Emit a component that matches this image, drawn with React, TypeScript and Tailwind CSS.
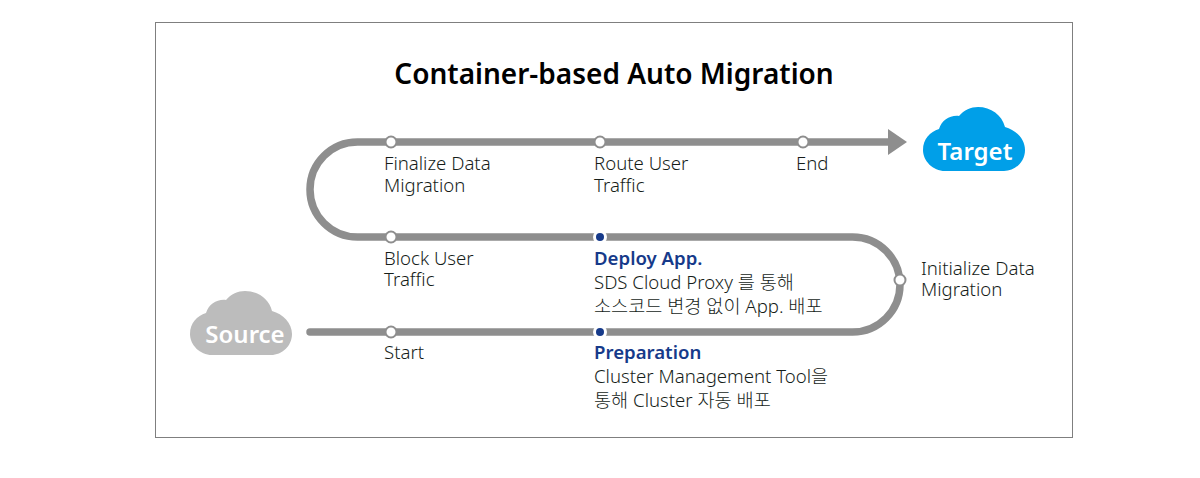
const cloud = "M22 64C10 64 0 54 0 43C0 32 7 25 16 22C19 13 27 8 36 9C41 3 48 0 55 0C68 0 79 8 82 20C93 23 102 32 102 43C102 55 92 64 81 64Z";

function Cloud({ className, fill, label, textClass }: { className: string; fill: string; label: string; textClass: string }) {
  return (
    <div className={`absolute h-[64px] w-[102px] ${className}`}>
      <svg width="102" height="64" viewBox="0 0 102 64" className="absolute inset-0">
        <path d={cloud} fill={fill} />
      </svg>
      <div className={`absolute inset-x-0 text-center text-[24px] leading-[34px] font-semibold text-white ${textClass}`}>{label}</div>
    </div>
  );
}

function Label({ className = "", lines, title, tight }: { className?: string; lines: string[]; title?: string; tight?: boolean }) {
  const lead = title ? "leading-[24px]" : tight ? "leading-[21px]" : "leading-[22px]";
  return (
    <div className={`whitespace-nowrap text-[18.6px] font-[260] text-[#161d19] ${className}`}>
      {title && <div className="leading-[24px] font-semibold text-[#163a8a]">{title}</div>}
      {lines.map((l) => (
        <div key={l} className={lead}>{l}</div>
      ))}
    </div>
  );
}

const whiteNodes = [[235, 48], [444, 48], [647, 48], [235, 143], [744, 186], [235, 238]];
const blueNodes = [[444, 143], [444, 238]];

export default function App() {
  return (
    <div className="h-[478px] w-[1200px] bg-white pt-[22px] pl-[155px] font-['Noto_Sans','Noto_Sans_CJK_KR',sans-serif]">
      <div className="flex h-[416px] w-[918px] flex-col border border-[#7f7f7f]">
        <h1 className="mt-[29px] text-center text-[28px] leading-[42px] font-semibold text-black">Container-based Auto Migration</h1>
        <div className="relative flex-1">
          <svg width="916" height="320" viewBox="0 0 916 320" className="absolute inset-0">
            <path
              d="M154 238H696.5A47.5 47.5 0 0 0 696.5 143H201.5A47.5 47.5 0 0 1 201.5 48H734"
              fill="none"
              stroke="#8e8e8e"
              strokeWidth="7.5"
              strokeLinecap="round"
            />
            <path d="M732 35L751 48L732 61Z" fill="#8e8e8e" />
            {whiteNodes.map(([x, y]) => (
              <circle key={`${x}-${y}`} cx={x} cy={y} r="5.5" fill="#fff" stroke="#8e8e8e" strokeWidth="2" />
            ))}
            {blueNodes.map(([x, y]) => (
              <g key={`${x}-${y}`}>
                <circle cx={x} cy={y} r="7" fill="#fff" />
                <circle cx={x} cy={y} r="4" fill="#163a8a" />
              </g>
            ))}
          </svg>
          <Cloud className="left-[767px] top-[13px]" fill="#009fe8" label="Target" textClass="bottom-[3px] translate-x-[1px]" />
          <Cloud className="left-[34px] top-[197px]" fill="#bcbcbc" label="Source" textClass="bottom-[4px] translate-x-[4px]" />
          <div className="relative grid grid-cols-[210px_202px_125px_auto] grid-rows-[95px_94px_auto] pt-[57.5px] pl-[228px]">
            <Label lines={["Finalize Data", "Migration"]} />
            <Label lines={["Route User", "Traffic"]} />
            <Label className="col-span-2" lines={["End"]} />
            <Label tight lines={["Block User", "Traffic"]} />
            <Label className="-mt-px" title="Deploy App." lines={["SDS Cloud Proxy 를 통해", "소스코드 변경 없이 App. 배포"]} />
            <div />
            <Label tight className="mt-[10px]" lines={["Initialize Data", "Migration"]} />
            <Label lines={["Start"]} />
            <Label className="-mt-px" title="Preparation" lines={["Cluster Management Tool을", "통해 Cluster 자동 배포"]} />
          </div>
        </div>
      </div>
    </div>
  );
}
